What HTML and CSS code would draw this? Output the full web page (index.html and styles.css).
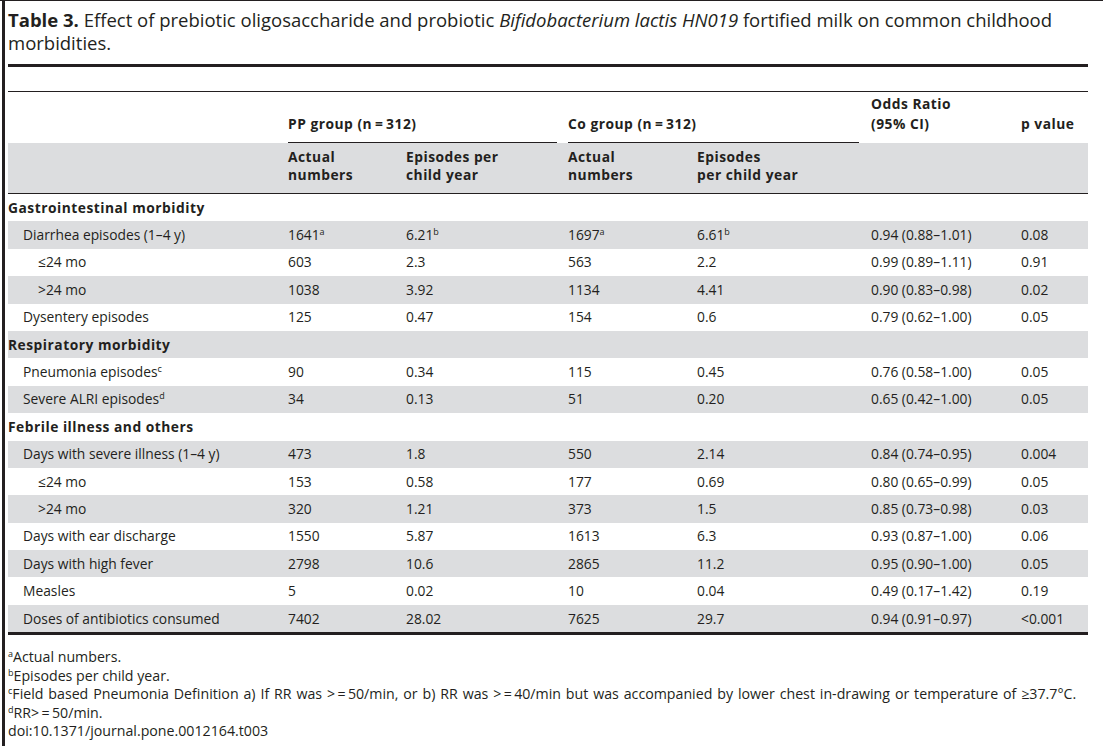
FILE: index.html
```html
<!DOCTYPE html>
<html lang="en">
<head>
<meta charset="utf-8">
<title>Table 3</title>
<link rel="stylesheet" href="styles.css">
</head>
<body>
<div class="frame">
  <p class="caption"><b>Table 3.</b> Effect of prebiotic oligosaccharide and probiotic <i>Bifidobacterium lactis HN019</i> fortified milk on common childhood morbidities.</p>
  <table class="data">
    <colgroup>
      <col class="c-label"><col class="c-pp1"><col class="c-pp2"><col class="c-co1"><col class="c-co2"><col class="c-or"><col class="c-p">
    </colgroup>
    <thead>
      <tr class="spacer"><td colspan="7"></td></tr>
      <tr class="head1">
        <th></th>
        <th colspan="2" class="grp"><div class="group pp">PP group (n&#8201;=&#8201;312)</div></th>
        <th colspan="2" class="grp"><div class="group co">Co group (n&#8201;=&#8201;312)</div></th>
        <th class="solo">Odds Ratio<br>(95% CI)</th>
        <th class="solo">p value</th>
      </tr>
      <tr class="head2">
        <th></th>
        <th>Actual<br>numbers</th>
        <th>Episodes per<br>child year</th>
        <th>Actual<br>numbers</th>
        <th>Episodes<br>per child year</th>
        <th></th>
        <th></th>
      </tr>
    </thead>
    <tbody>
      <tr class="section"><td colspan="7">Gastrointestinal morbidity</td></tr>
      <tr class="shade"><td class="l1">Diarrhea episodes (1&#8211;4 y)</td><td>1641<sup>a</sup></td><td>6.21<sup>b</sup></td><td>1697<sup>a</sup></td><td>6.61<sup>b</sup></td><td>0.94 (0.88&#8211;1.01)</td><td>0.08</td></tr>
      <tr><td class="l2">&#8804;24 mo</td><td>603</td><td>2.3</td><td>563</td><td>2.2</td><td>0.99 (0.89&#8211;1.11)</td><td>0.91</td></tr>
      <tr class="shade"><td class="l2">&gt;24 mo</td><td>1038</td><td>3.92</td><td>1134</td><td>4.41</td><td>0.90 (0.83&#8211;0.98)</td><td>0.02</td></tr>
      <tr><td class="l1">Dysentery episodes</td><td>125</td><td>0.47</td><td>154</td><td>0.6</td><td>0.79 (0.62&#8211;1.00)</td><td>0.05</td></tr>
      <tr class="section shade"><td colspan="7">Respiratory morbidity</td></tr>
      <tr><td class="l1">Pneumonia episodes<sup>c</sup></td><td>90</td><td>0.34</td><td>115</td><td>0.45</td><td>0.76 (0.58&#8211;1.00)</td><td>0.05</td></tr>
      <tr class="shade"><td class="l1">Severe ALRI episodes<sup>d</sup></td><td>34</td><td>0.13</td><td>51</td><td>0.20</td><td>0.65 (0.42&#8211;1.00)</td><td>0.05</td></tr>
      <tr class="section"><td colspan="7">Febrile illness and others</td></tr>
      <tr class="shade"><td class="l1">Days with severe illness (1&#8211;4 y)</td><td>473</td><td>1.8</td><td>550</td><td>2.14</td><td>0.84 (0.74&#8211;0.95)</td><td>0.004</td></tr>
      <tr><td class="l2">&#8804;24 mo</td><td>153</td><td>0.58</td><td>177</td><td>0.69</td><td>0.80 (0.65&#8211;0.99)</td><td>0.05</td></tr>
      <tr class="shade"><td class="l2">&gt;24 mo</td><td>320</td><td>1.21</td><td>373</td><td>1.5</td><td>0.85 (0.73&#8211;0.98)</td><td>0.03</td></tr>
      <tr><td class="l1">Days with ear discharge</td><td>1550</td><td>5.87</td><td>1613</td><td>6.3</td><td>0.93 (0.87&#8211;1.00)</td><td>0.06</td></tr>
      <tr class="shade"><td class="l1">Days with high fever</td><td>2798</td><td>10.6</td><td>2865</td><td>11.2</td><td>0.95 (0.90&#8211;1.00)</td><td>0.05</td></tr>
      <tr><td class="l1">Measles</td><td>5</td><td>0.02</td><td>10</td><td>0.04</td><td>0.49 (0.17&#8211;1.42)</td><td>0.19</td></tr>
      <tr class="shade"><td class="l1">Doses of antibiotics consumed</td><td>7402</td><td>28.02</td><td>7625</td><td>29.7</td><td>0.94 (0.91&#8211;0.97)</td><td>&lt;0.001</td></tr>
    </tbody>
  </table>
  <div class="notes">
    <p><sup>a</sup>Actual numbers.</p>
    <p><sup>b</sup>Episodes per child year.</p>
    <p class="wide"><sup>c</sup>Field based Pneumonia Definition a) If RR was &gt;&#8201;=&#8201;50/min, or b) RR was &gt;&#8201;=&#8201;40/min but was accompanied by lower chest in-drawing or temperature of &#8805;37.7&#176;C.</p>
    <p><sup>d</sup>RR&gt;&#8201;=&#8201;50/min.</p>
    <p>doi:10.1371/journal.pone.0012164.t003</p>
  </div>
</div>
</body>
</html>
```
FILE: styles.css
```css
html, body {
  margin: 0;
  padding: 0;
  background: #ffffff;
}
body {
  border-top: 1px solid #231f20;
  font-family: "Open Sans", "Liberation Sans", sans-serif;
  color: #231f20;
  height: 745px;
  overflow: hidden;
}
.frame {
  margin-left: 2px;
  border-left: 3px solid #231f20;
  padding-left: 3px;
  width: 1080px;
  height: 745px;
}
.caption {
  margin: 0;
  padding-top: 7px;
  font-size: 18.5px;
  line-height: 23px;
  width: 1080px;
}
.caption b { font-weight: 700; }
.data {
  margin-top: 10px;
  width: 1080px;
  border-collapse: collapse;
  table-layout: fixed;
  border-top: 3px solid #231f20;
  border-bottom: 3px solid #231f20;
  font-size: 13.8px;
}
.c-label { width: 280px; }
.c-pp1 { width: 118px; }
.c-pp2 { width: 162px; }
.c-co1 { width: 129px; }
.c-co2 { width: 174px; }
.c-or { width: 150px; }
.c-p { width: 67px; }
.data td, .data th {
  padding: 0;
  text-align: left;
  font-weight: 400;
}
.spacer td {
  height: 24px;
  border-bottom: 1px solid #231f20;
}
.head1 th {
  font-weight: 700;
  letter-spacing: 0.5px;
  vertical-align: bottom;
  line-height: 20px;
  padding-top: 2px;
  padding-bottom: 0;
}
.head1 th.solo {
  padding-bottom: 9px;
}
.group {
  border-bottom: 1px solid #231f20;
  padding-bottom: 8px;
}
.group.pp { margin-right: 11px; }
.group.co { margin-right: 12px; }
.head2 th {
  background: #dcdddf;
  font-weight: 700;
  letter-spacing: 0.5px;
  line-height: 18px;
  padding-top: 5px;
  padding-bottom: 9px;
  vertical-align: top;
  border-bottom: 1px solid #231f20;
}
.data tbody td {
  height: 27.4px;
  line-height: 18px;
  vertical-align: middle;
}
.data tbody tr.shade td { background: #dcdddf; }
.section td {
  font-weight: 700;
  letter-spacing: 0.5px;
}
.l1 { padding-left: 15px !important; }
.l2 { padding-left: 30px !important; }
sup {
  font-size: 9px;
  line-height: 0;
  vertical-align: 5px;
  letter-spacing: 0;
}
.notes {
  margin-top: 13px;
  font-size: 14.2px;
  line-height: 18.5px;
}
.notes p { margin: 0; }
.notes .wide { word-spacing: 1.2px; }
```
